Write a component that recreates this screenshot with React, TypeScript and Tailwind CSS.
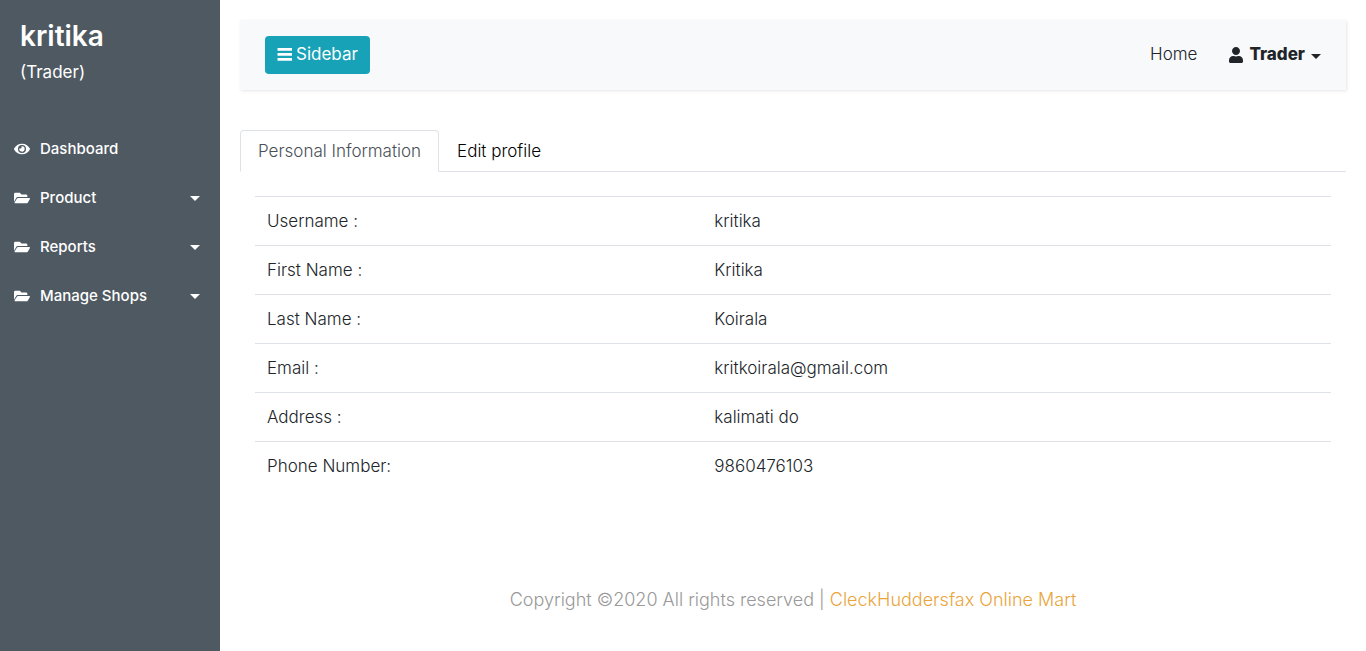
import { FaEye, FaFolderOpen, FaUser } from "react-icons/fa";

const menu = ["Product", "Reports", "Manage Shops"];

const profile = [
  ["Username :", "kritika"],
  ["First Name :", "Kritika"],
  ["Last Name :", "Koirala"],
  ["Email :", "kritkoirala@gmail.com"],
  ["Address :", "kalimati do"],
  ["Phone Number:", "9860476103"],
];

function Caret() {
  return (
    <span
      aria-hidden="true"
      className="mt-0.5 inline-block border-x-5 border-t-5 border-x-transparent border-t-current"
    />
  );
}

function LinesIcon() {
  return (
    <svg viewBox="0 0 15 14" className="h-3.5 w-[15px]" fill="currentColor" aria-hidden="true">
      <rect x="0.5" y="0" width="14.5" height="2.7" rx="0.3" />
      <rect x="0.5" y="5" width="14.5" height="2.7" rx="0.3" />
      <rect x="0.5" y="10" width="14.5" height="2.7" rx="0.3" />
    </svg>
  );
}

function Sidebar() {
  return (
    <aside className="w-[220px] shrink-0 bg-[#4f5962] text-white">
      <header className="px-5 pt-5 pb-10">
        <h3 className="text-[28px] leading-8 font-semibold">kritika</h3>
        <p className="mt-2 text-[17px] leading-6">(Trader)</p>
      </header>
      <nav aria-label="Main">
        <ul className="text-[15px] leading-6 font-medium">
          <li>
            <a href="#dashboard" className="flex h-[49px] items-center gap-2.5 pr-5 pl-3.5">
              <FaEye className="size-4" />
              Dashboard
            </a>
          </li>
          {menu.map((label) => (
            <li key={label}>
              <button
                type="button"
                aria-expanded="false"
                className="flex h-[49px] w-full items-center gap-2.5 pr-5 pl-3.5 text-left"
              >
                <FaFolderOpen className="size-4" />
                <span className="grow">{label}</span>
                <Caret />
              </button>
            </li>
          ))}
        </ul>
      </nav>
    </aside>
  );
}

function TopBar() {
  return (
    <header className="flex items-center justify-between bg-[#f8f9fb] px-[25px] py-4 shadow-[1px_1px_3px_rgba(0,0,0,0.1)]">
      <button
        type="button"
        className="flex h-[38px] items-center gap-1 rounded bg-[#17a2b8] px-3 text-[17px] text-white"
      >
        <LinesIcon />
        Sidebar
      </button>
      <nav aria-label="Account" className="flex items-center gap-8 text-[17px] text-[#212529]">
        <a href="#home" className="font-light">
          Home
        </a>
        <button
          type="button"
          aria-haspopup="menu"
          className="flex items-center gap-1.5 font-extrabold"
        >
          <FaUser className="h-4 w-3.5" />
          Trader
          <Caret />
        </button>
      </nav>
    </header>
  );
}

export default function App() {
  return (
    <div className="flex min-h-screen bg-white font-['Inter',sans-serif] text-[#212529]">
      <Sidebar />
      <div className="min-w-0 grow p-5">
        <TopBar />
        <main className="mt-10">
          <div role="tablist" className="flex border-b border-[#dee2e6] text-[17px] leading-6 font-light">
            <button
              type="button"
              role="tab"
              aria-selected="true"
              className="-mb-px rounded-t border border-[#dee2e6] border-b-white bg-white px-[17px] py-2 text-[#495057]"
            >
              Personal Information
            </button>
            <button
              type="button"
              role="tab"
              aria-selected="false"
              className="-mb-px border border-transparent px-[17px] py-2 text-black"
            >
              Edit profile
            </button>
          </div>
          <div role="tabpanel" className="px-[15px] pt-6">
            <table className="w-full table-fixed text-left text-[17px] leading-6 font-light">
              <tbody>
                {profile.map(([label, value]) => (
                  <tr key={label} className="border-t border-[#dee2e6]">
                    <th scope="row" className="w-5/12 p-3 font-light">
                      {label}
                    </th>
                    <td className="px-[11px] py-3">{value}</td>
                  </tr>
                ))}
              </tbody>
            </table>
          </div>
        </main>
        <footer className="mt-24 text-center text-lg leading-7 font-light text-[#999999]">
          Copyright ©2020 All rights reserved |{" "}
          <a href="#mart" className="text-[#e9a53b]">
            CleckHuddersfax Online Mart
          </a>
        </footer>
      </div>
    </div>
  );
}
